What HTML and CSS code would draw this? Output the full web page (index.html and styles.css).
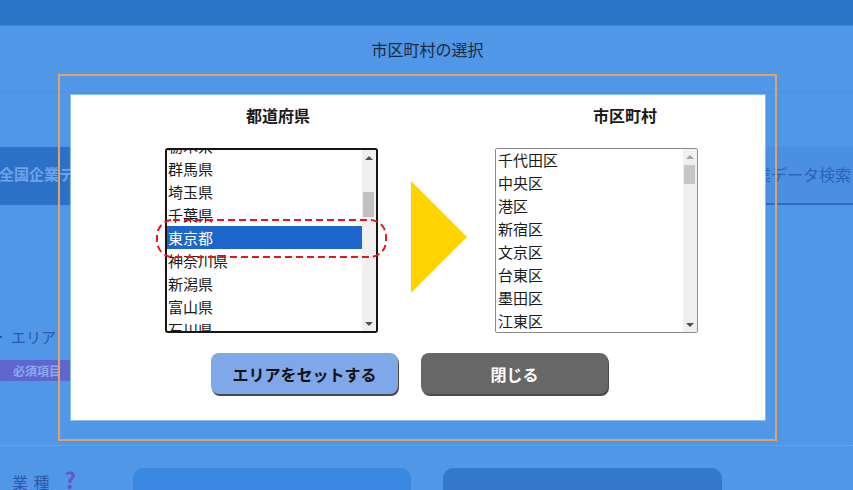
FILE: index.html
```html
<!DOCTYPE html>
<html lang="ja">
<head>
<meta charset="utf-8">
<title>市区町村の選択</title>
<link rel="stylesheet" href="styles.css">
</head>
<body>
<div class="page">
  <div class="topbar"></div>
  <div class="titlebar">市区町村の選択</div>
  <div class="gap1"></div>
  <div class="tabs">
    <div class="tab tab-on"><span class="tab-text-left">全国企業データ検索</span></div>
    <div class="tab tab-off"><span class="tab-text-right">全国企業データ検索</span></div>
  </div>
  <div class="gap2"></div>
  <div class="area-label"><span class="mark"></span>エリア</div>
  <div class="gap3"></div>
  <div class="required">必須項目</div>
  <div class="gap4"></div>
  <div class="dotted"></div>
  <div class="bottom-row">
    <div class="gyoshu">業 種<span class="q">?</span></div>
    <div class="bbtn bbtn1"></div>
    <div class="bbtn bbtn2"></div>
  </div>
</div>

<div class="modal">
  <div class="panel">
    <div class="heads">
      <div class="head head1">都道府県</div>
      <div class="head head2">市区町村</div>
    </div>
    <div class="lists">
      <div class="listwrap">
        <div class="listbox lb1">
          <div class="items">
            <ul class="opts opts1">
              <li>栃木県</li>
              <li>群馬県</li>
              <li>埼玉県</li>
              <li>千葉県</li>
              <li class="sel">東京都</li>
              <li>神奈川県</li>
              <li>新潟県</li>
              <li>富山県</li>
              <li>石川県</li>
            </ul>
          </div>
          <div class="sb sb1">
            <div class="arr up"></div>
            <div class="track"><div class="thumb thumb1"></div></div>
            <div class="arr down"></div>
          </div>
        </div>
        <svg class="dash" width="231" height="39" viewBox="0 0 231 39">
          <rect x="1" y="1" width="229" height="37" rx="16" ry="16" fill="none" stroke="#e8141c" stroke-width="2" stroke-dasharray="7 4"/>
        </svg>
      </div>
      <div class="arrow"></div>
      <div class="listbox lb2">
        <div class="items">
          <ul class="opts opts2">
            <li>千代田区</li>
            <li>中央区</li>
            <li>港区</li>
            <li>新宿区</li>
            <li>文京区</li>
            <li>台東区</li>
            <li>墨田区</li>
            <li>江東区</li>
            <li>品川区</li>
          </ul>
        </div>
        <div class="sb sb2">
          <div class="arr up light"></div>
          <div class="track"><div class="thumb thumb2"></div></div>
          <div class="arr down"></div>
        </div>
      </div>
    </div>
    <div class="btns">
      <button class="btn btn-set">エリアをセットする</button>
      <button class="btn btn-close">閉じる</button>
    </div>
  </div>
</div>
</body>
</html>
```

FILE: styles.css
```css
* { box-sizing: border-box; }
html, body {
  margin: 0;
  padding: 0;
}
body {
  width: 853px;
  height: 490px;
  overflow: hidden;
  background: #5097e8;
  font-family: "Noto Sans CJK JP", "Noto Sans", sans-serif;
  position: relative;
}
.page {
  width: 853px;
  height: 490px;
}
.topbar {
  height: 26px;
  background: #2a74c8;
  border-bottom: 1px solid #3f86d8;
}
.titlebar {
  height: 67px;
  line-height: 47px;
  text-align: center;
  font-size: 16px;
  color: #1b2a40;
  padding-left: 2px;
  border-bottom: 1px solid #4a8fe0;
}
.gap1 { height: 54px; }
.tabs {
  height: 58px;
  display: flex;
}
.tab {
  overflow: hidden;
  white-space: nowrap;
  font-size: 15px;
  font-weight: bold;
  line-height: 54px;
}
.tab-on {
  width: 426px;
  background: #2d71c7;
  color: #6ea4ea;
}
.tab-text-left { margin-left: -1px; }
.tab-off {
  flex: 1;
  background: #4a8fe2;
  border-bottom: 2px solid #2b6cc2;
  color: #2a63b6;
  text-align: right;
  padding-right: 2px;
  font-size: 16px;
  font-weight: normal;
}
.gap2 { height: 122px; }
.area-label {
  height: 20px;
  line-height: 20px;
  font-size: 15px;
  color: #2a5aa6;
  padding-left: 11px;
  position: relative;
}
.mark {
  display: inline-block;
  width: 2px;
  height: 2px;
  background: #2a5aa6;
  position: absolute;
  left: 0;
  top: 9px;
}
.gap3 { height: 13px; }
.required {
  width: 72px;
  height: 21px;
  line-height: 21px;
  background: #6166cf;
  color: #8aaaf0;
  font-size: 12px;
  font-weight: bold;
  padding-left: 13px;
}
.gap4 { height: 64px; }
.dotted {
  height: 1px;
  border-top: 1px dotted #72aef2;
}
.bottom-row {
  margin-top: 22px;
  display: flex;
  align-items: flex-start;
}
.gyoshu {
  width: 133px;
  padding-left: 12px;
  padding-top: 2px;
  font-size: 16px;
  color: #2a5aa6;
  letter-spacing: 1px;
}
.q {
  margin-left: 14px;
  color: #6656c8;
  font-weight: bold;
  font-size: 22px;
  line-height: 16px;
}
.bbtn {
  height: 30px;
  border-radius: 10px 10px 0 0;
}
.bbtn1 {
  width: 278px;
  background: #3a88e0;
}
.bbtn2 {
  width: 279px;
  margin-left: 32px;
  background: #3479c9;
}

/* modal overlay */
.modal {
  position: absolute;
  left: 58px;
  top: 74px;
  width: 719px;
  height: 367px;
  border: 2px solid #dea55e;
  padding: 18px 9px 18px 10px;
}
.panel {
  width: 696px;
  height: 327px;
  background: #fff;
  border: 1px solid #8bbbf2;
  padding-top: 10px;
}
.heads {
  display: flex;
  height: 20px;
}
.head {
  width: 120px;
  text-align: center;
  font-size: 16px;
  font-weight: bold;
  line-height: 20px;
  color: #1a1a1a;
}
.head1 { margin-left: 147px; }
.head2 { margin-left: 227px; }
.lists {
  display: flex;
  align-items: flex-start;
  margin-top: 23px;
  padding-left: 94px;
  height: 185px;
}
.listwrap {
  position: relative;
  width: 213px;
  height: 185px;
}
.listbox {
  display: flex;
  overflow: hidden;
  background: #fff;
}
.lb1 {
  width: 213px;
  height: 185px;
  border: 2px solid #151515;
  border-radius: 3px;
}
.lb2 {
  width: 203px;
  height: 185px;
  border: 1px solid #8c8c8c;
  border-radius: 2px;
}
.items {
  flex: 1;
  overflow: hidden;
}
.opts {
  list-style: none;
  margin: 0;
  padding: 0;
}
.opts li {
  height: 23px;
  line-height: 23px;
  font-size: 15px;
  color: #1a1a1a;
  white-space: nowrap;
}
.opts1 { margin-top: -16px; }
.opts1 li { padding-left: 1px; }
.opts1 li.sel {
  background: #1c66cc;
  color: #fff;
}
.opts2 { margin-top: -1px; }
.opts2 li { padding-left: 2px; }
.sb {
  width: 14px;
  background: #f0f0f0;
  display: flex;
  flex-direction: column;
}
.arr {
  height: 15px;
  display: flex;
  align-items: center;
  justify-content: center;
}
.arr::before {
  content: "";
  width: 0;
  height: 0;
  border-left: 4px solid transparent;
  border-right: 4px solid transparent;
}
.arr.up::before { border-bottom: 4px solid #505050; }
.arr.up.light::before { border-bottom-color: #a3a3a3; }
.arr.down::before { border-top: 4px solid #505050; }
.track {
  flex: 1;
  position: relative;
}
.thumb {
  position: absolute;
  left: 1px;
  right: 2px;
  background: #c1c1c1;
}
.thumb1 { top: 27px; height: 25px; }
.thumb2 { top: 1px; height: 19px; background: #c6c6c6; }
.dash {
  position: absolute;
  left: -9px;
  top: 71px;
}
.arrow {
  width: 0;
  height: 0;
  margin-top: 33px;
  margin-left: 33px;
  margin-right: 28px;
  border-top: 56px solid transparent;
  border-bottom: 56px solid transparent;
  border-left: 56px solid #ffd400;
}
.btns {
  display: flex;
  gap: 23px;
  padding-left: 140px;
  margin-top: 20px;
}
.btn {
  width: 187px;
  height: 41px;
  border-radius: 8px;
  border: none;
  font-family: "Noto Sans CJK JP", "Noto Sans", sans-serif;
  font-size: 16px;
  font-weight: bold;
  padding: 0;
  box-shadow: 1px 2px 0 #4a4a4a;
}
.btn-set {
  background: #7fa8ea;
  color: #111;
}
.btn-close {
  background: #676767;
  color: #fff;
}
```
